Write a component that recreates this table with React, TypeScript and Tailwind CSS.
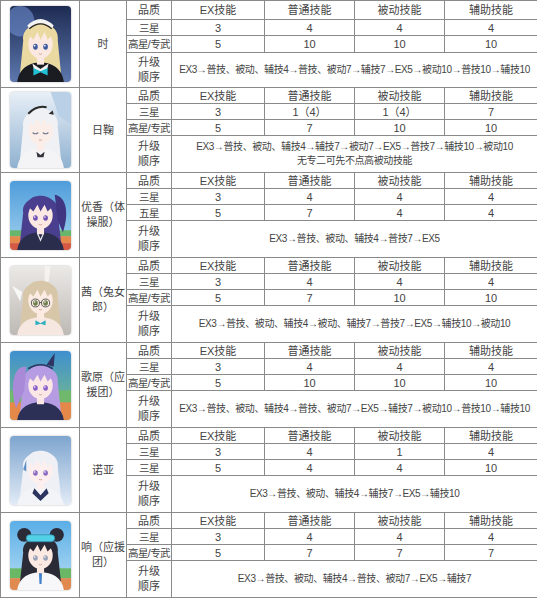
import { Fragment, type ReactNode } from 'react';

const CELL = 'border border-[#8a8a8a] p-0 text-center align-middle';

type Pic = {
  id: string;
  bg: [string, string];
  hair: string;
  skin: string;
  eye: string;
  clothes: string;
  back?: ReactNode;
  behind?: ReactNode;
  extra?: ReactNode;
  closed?: boolean;
};

type Block = {
  name: string[];
  rows: [string, string[]][];
  seq: string[];
  pic: Pic;
  tall?: boolean;
};

function Portrait({ p, h }: { p: Pic; h: number }) {
  return (
    <div className="mx-auto overflow-hidden rounded-[4px] shadow-[0_0_2px_rgba(0,0,0,0.35)]" style={{ width: 61, height: h }}>
      <svg viewBox="0 0 60 70" width={61} height={h} preserveAspectRatio="none">
        <defs>
          <linearGradient id={`bg-${p.id}`} x1="0" y1="0" x2="0" y2="1">
            <stop offset="0" stopColor={p.bg[0]} />
            <stop offset="1" stopColor={p.bg[1]} />
          </linearGradient>
        </defs>
        <rect width="60" height="70" fill={`url(#bg-${p.id})`} />
        {p.back}
        {/* hair behind head */}
        <path d="M13 32 C10 12 50 10 47 32 L51 70 L9 70 Z" fill={p.hair} />
        {p.behind}
        {/* body */}
        <path d="M7 70 C9 57 19 52 30 52 C41 52 51 57 53 70 Z" fill={p.clothes} />
        <rect x="26.5" y="44" width="7" height="10" fill={p.skin} />
        <ellipse cx="30" cy="35" rx="12" ry="13.5" fill={p.skin} />
        {/* bangs */}
        <path d="M16.5 36 C14 18 23 15 30 15 C38 15 47 19 43.5 36 L41 27 L37 31 L34 24 L30 31 L27 24 L23 31 L19 27 Z" fill={p.hair} />
        <path d="M16.5 36 L15 50 L19 44 Z M43.5 36 L45 50 L41 44 Z" fill={p.hair} />
        {p.closed ? (
          <g stroke="#6e7390" strokeWidth="1" fill="none" strokeLinecap="round">
            <path d="M22.5 37.5 Q25 39.5 27.5 37.5" />
            <path d="M32.5 37.5 Q35 39.5 37.5 37.5" />
          </g>
        ) : (
          <g>
            <ellipse cx="25" cy="37.5" rx="2.3" ry="2.8" fill={p.eye} />
            <ellipse cx="35" cy="37.5" rx="2.3" ry="2.8" fill={p.eye} />
            <circle cx="24.3" cy="36.6" r="0.8" fill="#fff" />
            <circle cx="34.3" cy="36.6" r="0.8" fill="#fff" />
          </g>
        )}
        <path d="M28.5 44 Q30 45 31.5 44" stroke="#c98b86" strokeWidth="0.7" fill="none" />
        {p.extra}
      </svg>
    </div>
  );
}

const field = (
  <g>
    <rect x="0" y="50" width="60" height="6" fill="#69b56b" />
    <rect x="0" y="56" width="60" height="7" fill="#e48a4c" />
    <rect x="0" y="63" width="60" height="7" fill="#d65a43" />
  </g>
);

const BLOCKS: Block[] = [
  {
    name: ['时'],
    tall: true,
    rows: [
      ['三星', ['3', '4', '4', '4']],
      ['高星/专武', ['5', '10', '10', '10']],
    ],
    seq: ['EX3→普技、被动、辅技4→普技、被动7→辅技7→EX5→被动10→普技10→辅技10'],
    pic: {
      id: 'toki',
      bg: ['#1d2b52', '#5d78ae'],
      hair: '#ead9a0',
      skin: '#fbe9e1',
      eye: '#3c5a9e',
      clothes: '#1b1b22',
      back: <circle cx="10" cy="14" r="14" fill="#6f8fd2" opacity="0.6" />,
      extra: (
        <g>
          <path d="M17 18 Q30 6 43 18 L41 21 Q30 11 19 21 Z" fill="#f3f3f3" />
          <path d="M19 21 Q30 12 41 21" stroke="#222" strokeWidth="1.2" fill="none" />
          <path d="M22 53 L30 58 L38 53 L36 60 L24 60 Z" fill="#f2f2f2" />
          <path d="M23 57 L30 60 L37 57 L37 64 L30 61 L23 64 Z" fill="#22c0d4" />
        </g>
      ),
    },
  },
  {
    name: ['日鞠'],
    tall: true,
    rows: [
      ['三星', ['3', '1（4）', '1（4）', '7']],
      ['高星/专武', ['5', '7', '10', '10']],
    ],
    seq: ['EX3→普技、被动、辅技4→辅技7→被动7→EX5→普技7→辅技10→被动10', '无专二可先不点高被动技能'],
    pic: {
      id: 'himari',
      bg: ['#e8eff7', '#8fb1d0'],
      hair: '#f0f1f5',
      skin: '#fbede8',
      eye: '#6e7390',
      clothes: '#f4f4f7',
      closed: true,
      back: <path d="M40 0 L60 0 L60 30 L48 22 Z" fill="#b9d0e6" />,
      extra: (
        <g>
          <path d="M18 20 Q26 12 36 14" stroke="#2a2a2a" strokeWidth="2" fill="none" />
          <path d="M38 20 l4 -3 l1 4 z" fill="#2a2a2a" />
          <path d="M26 55 L30 58 L34 55 L33 60 L27 60 Z" fill="#33343c" />
        </g>
      ),
    },
  },
  {
    name: ['优香（体', '操服）'],
    rows: [
      ['三星', ['3', '4', '4', '4']],
      ['五星', ['5', '7', '4', '4']],
    ],
    seq: ['EX3→普技、被动、辅技4→普技7→EX5'],
    pic: {
      id: 'yuka',
      bg: ['#4f9ddb', '#a3d2ef'],
      hair: '#4a3f8f',
      skin: '#fbe8e2',
      eye: '#7152b3',
      clothes: '#2a2d4b',
      back: field,
      behind: <path d="M44 14 C56 16 58 34 52 52 L47 40 Z" fill="#3f3580" />,
      extra: <path d="M27 53 L30 60 L33 53" stroke="#e8e8ee" strokeWidth="1.2" fill="none" />,
    },
  },
  {
    name: ['茜（兔女', '郎）'],
    rows: [
      ['三星', ['3', '4', '4', '4']],
      ['高星/专武', ['5', '7', '10', '10']],
    ],
    seq: ['EX3→普技、被动、辅技4→被动、辅技7→普技7→EX5→辅技10→被动10'],
    pic: {
      id: 'akane',
      bg: ['#ebe9e6', '#bdb9b5'],
      hair: '#d8c6a8',
      skin: '#fbebe3',
      eye: '#6e7d4c',
      clothes: '#f6e8e1',
      back: (
        <g>
          <path d="M34 0 L40 0 L38 16 L34 16 Z" fill="#f4f1ee" />
          <path d="M2 20 L12 26 L10 36 Z" fill="#ffffff" opacity="0.8" />
        </g>
      ),
      extra: (
        <g>
          <g stroke="#4a4a4a" strokeWidth="0.9" fill="none">
            <circle cx="25" cy="37.5" r="4" />
            <circle cx="35" cy="37.5" r="4" />
            <path d="M29 37 L31 37" />
          </g>
          <path d="M25 55 L30 58 L35 55 L35 60 L30 58.5 L25 60 Z" fill="#2ab0c0" />
        </g>
      ),
    },
  },
  {
    name: ['歌原（应', '援团）'],
    rows: [
      ['三星', ['3', '4', '4', '4']],
      ['高星/专武', ['5', '10', '10', '10']],
    ],
    seq: ['EX3→普技、被动、辅技4→普技、被动7→EX5→辅技7→被动10→普技10→辅技10'],
    pic: {
      id: 'utaha',
      bg: ['#3f8fd0', '#7fc47c'],
      hair: '#b69ce2',
      skin: '#fbe8e6',
      eye: '#8a5ec9',
      clothes: '#2c3057',
      back: (
        <g>
          <rect x="0" y="40" width="60" height="12" fill="#6fb86c" />
          <rect x="0" y="52" width="60" height="18" fill="#e5894a" />
        </g>
      ),
      behind: <path d="M16 16 C2 14 0 40 6 58 L14 40 Z" fill="#a88ad9" />,
      extra: (
        <g>
          <path d="M18 18 Q30 10 42 18" stroke="#2f3563" strokeWidth="1.6" fill="none" />
          <path d="M36 14 L44 2 L43 16 Z" fill="#2f3563" />
        </g>
      ),
    },
  },
  {
    name: ['诺亚'],
    rows: [
      ['三星', ['3', '4', '1', '4']],
      ['三星', ['5', '4', '4', '10']],
    ],
    seq: ['EX3→普技、被动、辅技4→辅技7→EX5→辅技10'],
    pic: {
      id: 'noa',
      bg: ['#7ea5cf', '#e2ebf6'],
      hair: '#eef0f6',
      skin: '#fcefed',
      eye: '#8c6cc2',
      clothes: '#f3f4f8',
      extra: (
        <g>
          <path d="M16 24 L13 34 L16 36 Z" fill="#5d8fc4" />
          <path d="M24 53 L30 60 L36 53 L38 58 L30 66 L22 58 Z" fill="#2b3560" />
        </g>
      ),
    },
  },
  {
    name: ['响（应援', '团）'],
    rows: [
      ['三星', ['3', '4', '4', '4']],
      ['高星/专武', ['5', '7', '7', '7']],
    ],
    seq: ['EX3→普技、被动、辅技4→普技、被动7→EX5→辅技7'],
    pic: {
      id: 'hibiki',
      bg: ['#5aaee6', '#b8def5'],
      hair: '#2b2a37',
      skin: '#fbe9e2',
      eye: '#9aa2b8',
      clothes: '#f7f7f9',
      back: (
        <g>
          <rect x="0" y="48" width="60" height="10" fill="#6ab866" />
          <rect x="0" y="58" width="60" height="12" fill="#e08a50" />
        </g>
      ),
      behind: (
        <g fill="#2b2a37">
          <circle cx="14" cy="14" r="7" />
          <circle cx="46" cy="14" r="7" />
        </g>
      ),
      extra: (
        <g>
          <rect x="16" y="14" width="28" height="7" rx="3.5" fill="#52d1e6" stroke="#2f8fb0" strokeWidth="0.8" />
          <path d="M28.5 53 L31.5 53 L31 64 L29 64 Z" fill="#3f7fc9" />
        </g>
      ),
    },
  },
];

const HEAD = ['品质', 'EX技能', '普通技能', '被动技能', '辅助技能'];

export default function App() {
  return (
    <div className="h-[600px] w-[537px] overflow-hidden bg-white font-['Liberation_Sans','Noto_Sans_CJK_SC',sans-serif] text-[11px] leading-[14px] text-[#444]">
      <table className="w-[537px] table-fixed border-collapse">
        <colgroup>
          <col className="w-[79px]" />
          <col className="w-[47px]" />
          <col className="w-[45px]" />
          <col className="w-[93px]" />
          <col className="w-[90px]" />
          <col className="w-[90px]" />
          <col className="w-[93px]" />
        </colgroup>
        <tbody>
          {BLOCKS.map((b) => (
            <Fragment key={b.pic.id}>
              <tr className={b.pic.id === 'toki' ? 'h-[19px]' : 'h-[16px]'}>
                <td rowSpan={4} className={CELL}>
                  <Portrait p={b.pic} h={b.tall ? 76 : 69} />
                </td>
                <td rowSpan={4} className={CELL}>
                  {b.name.map((n) => (
                    <div key={n} className="leading-[15px]">{n}</div>
                  ))}
                </td>
                {HEAD.map((t) => (
                  <td key={t} className={CELL}>{t}</td>
                ))}
              </tr>
              {b.rows.map(([label, vals], i) => (
                <tr key={i} className={b.pic.id === 'toki' && i === 1 ? 'h-[17px]' : 'h-[16px]'}>
                  <td className={`${CELL} whitespace-nowrap text-[10.5px] tracking-[-0.6px]`}>{label}</td>
                  {vals.map((v, j) => (
                    <td key={j} className={CELL}>{v}</td>
                  ))}
                </tr>
              ))}
              <tr className={b.pic.id === 'toki' ? 'h-[35px]' : 'h-[37px]'}>
                <td className={CELL}>
                  <div className="leading-[15px]">升级</div>
                  <div className="leading-[15px]">顺序</div>
                </td>
                <td colSpan={4} className={`${CELL} text-[10px] tracking-[-0.4px]`}>
                  {b.seq.map((s) => (
                    <div key={s} className="whitespace-nowrap leading-[14px]">{s}</div>
                  ))}
                </td>
              </tr>
            </Fragment>
          ))}
        </tbody>
      </table>
    </div>
  );
}
